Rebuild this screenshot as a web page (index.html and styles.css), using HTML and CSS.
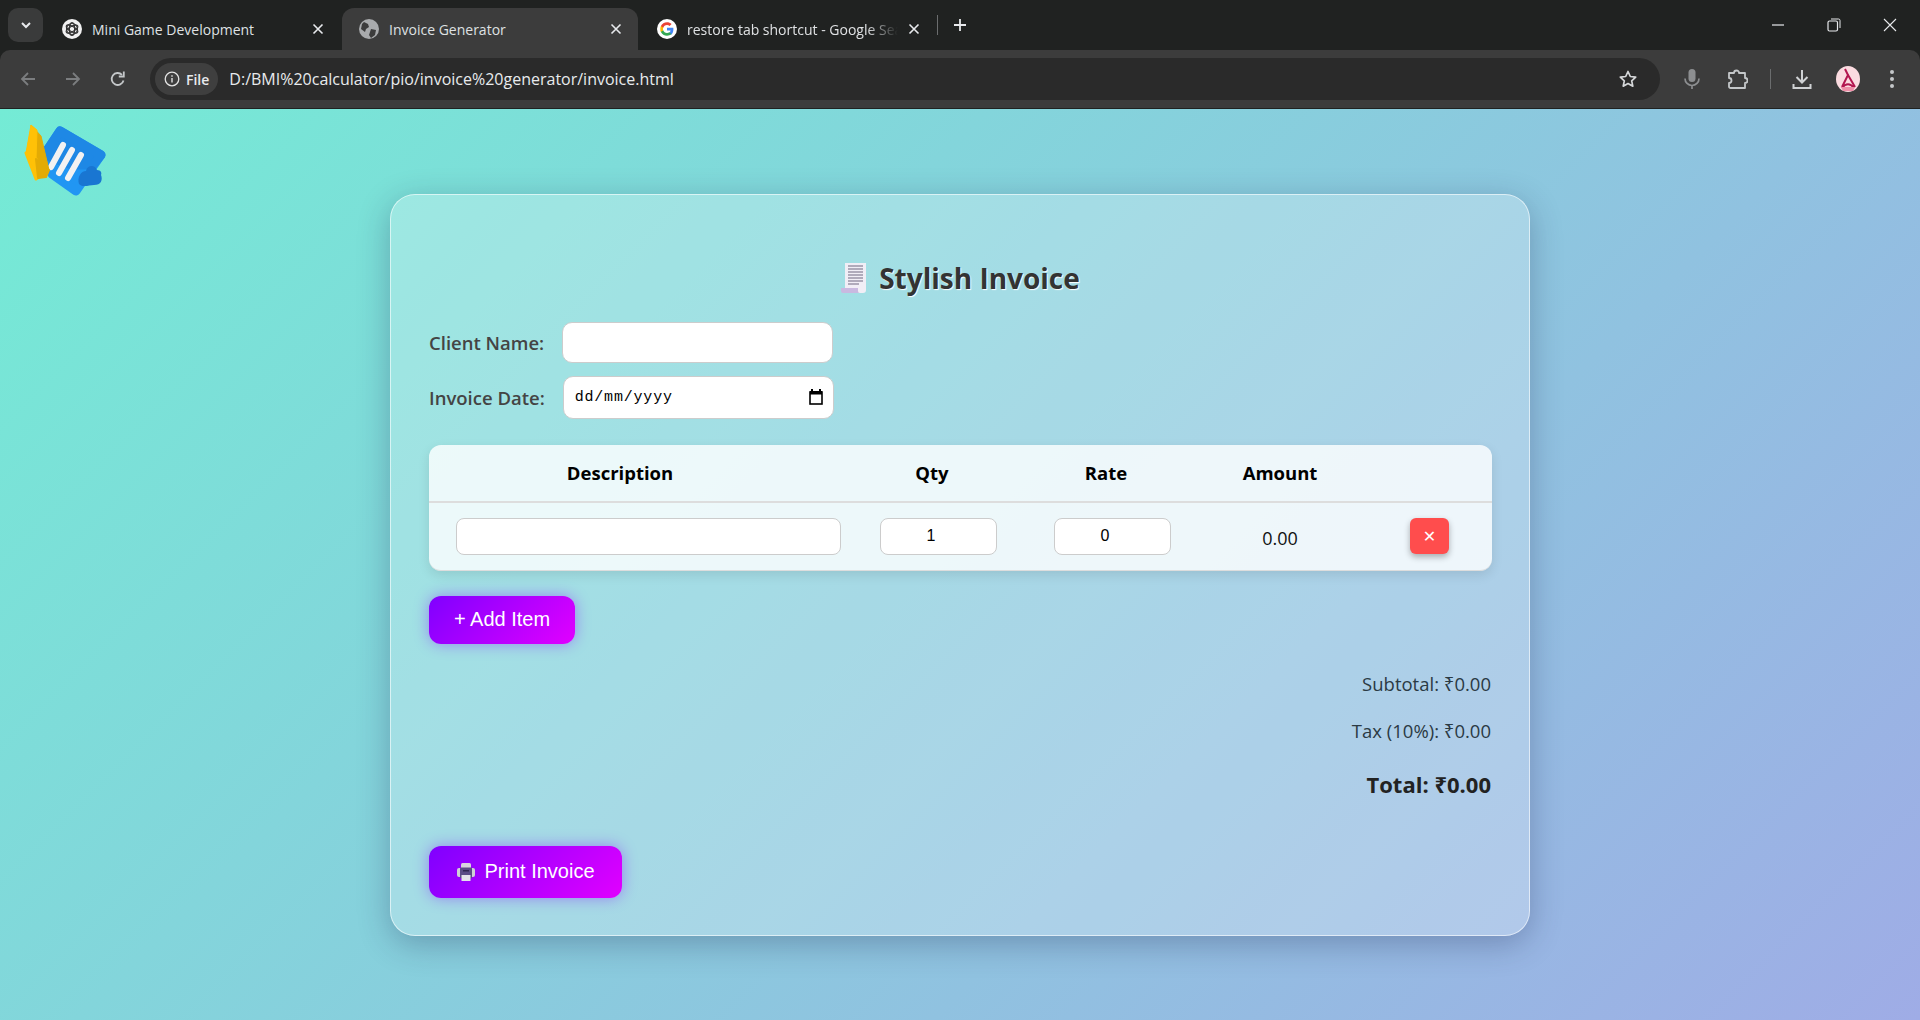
FILE: index.html
```html
<!DOCTYPE html>
<html>
<head>
  <meta charset="UTF-8">
  <title>Invoice Generator</title>
  <link rel="stylesheet" href="styles.css">
</head>
<body>
  <header class="browser">
    <div class="tabstrip">
      <button class="tab-search">
        <svg width="12" height="12" viewBox="0 0 12 12"><path d="M2 4l4 4 4-4" fill="none" stroke="#e8eaed" stroke-width="2"/></svg>
      </button>
      <div class="tab">
        <svg class="favicon" width="20" height="20" viewBox="0 0 20 20"><circle cx="10" cy="10" r="10" fill="#f1f1f1"/><g fill="none" stroke="#333" stroke-width="1.2"><circle cx="10" cy="10" r="5.5"/><ellipse cx="10" cy="10" rx="6.5" ry="2.6" transform="rotate(30 10 10)"/><ellipse cx="10" cy="10" rx="6.5" ry="2.6" transform="rotate(90 10 10)"/><ellipse cx="10" cy="10" rx="6.5" ry="2.6" transform="rotate(150 10 10)"/></g></svg>
        <span class="tab-title">Mini Game Development</span>
        <svg class="tab-close" width="12" height="12" viewBox="0 0 12 12"><path d="M1.5 1.5l9 9M10.5 1.5l-9 9" stroke="#e8eaed" stroke-width="1.6"/></svg>
      </div>
      <div class="tab tab-active">
        <svg class="favicon" width="20" height="20" viewBox="0 0 20 20"><circle cx="10" cy="10" r="10" fill="#a9abad"/><path d="M5 3l4 2 1 3-3 2-1 3-4-3 1-5zM12 10l5 1-1 5-4 3-2-3 1-3z" fill="#3c3c3c"/></svg>
        <span class="tab-title">Invoice Generator</span>
        <svg class="tab-close" width="12" height="12" viewBox="0 0 12 12"><path d="M1.5 1.5l9 9M10.5 1.5l-9 9" stroke="#e8eaed" stroke-width="1.6"/></svg>
      </div>
      <div class="tab">
        <svg class="favicon" width="20" height="20" viewBox="0 0 20 20"><circle cx="10" cy="10" r="10" fill="#fff"/><path d="M16.4 10.2c0-.5 0-1-.1-1.4H10v2.7h3.6c-.2.9-.6 1.6-1.3 2.1v1.8h2.2c1.2-1.2 1.9-3 1.9-5.2z" fill="#4285f4"/><path d="M10 16.7c1.8 0 3.300-.6 4.500-1.600l-2.200-1.800c-.6.4-1.400.7-2.300.7-1.800 0-3.300-1.200-3.800-2.800H3.900v1.800c1.100 2.200 3.400 3.700 6.100 3.700z" fill="#34a853"/><path d="M6.200 11.200c-.3-.8-.3-1.600 0-2.400V7H3.900c-.8 1.900-.8 4 0 6z" fill="#fbbc05"/><path d="M10 5.900c1 0 1.900.3 2.600 1l2-2C13.300 3.800 11.800 3.200 10 3.200 7.300 3.200 5 4.700 3.900 7l2.300 1.800C6.700 7.100 8.200 5.900 10 5.900z" fill="#ea4335"/></svg>
        <span class="tab-title tab-fade">restore tab shortcut - Google Search</span>
        <svg class="tab-close" width="12" height="12" viewBox="0 0 12 12"><path d="M1.500 1.500l9 9M10.500 1.500l-9 9" stroke="#e8eaed" stroke-width="1.600"/></svg>
      </div>
      <span class="tab-sep"></span>
      <svg class="new-tab" width="14" height="14" viewBox="0 0 14 14"><path d="M7 1v12M1 7h12" stroke="#e8eaed" stroke-width="1.800"/></svg>
      <div class="window-controls">
        <svg width="14" height="14" viewBox="0 0 14 14"><path d="M1 7h12" stroke="#e8eaed" stroke-width="1.200"/></svg>
        <svg width="14" height="14" viewBox="0 0 14 14"><rect x="1" y="3" width="9.500" height="10" rx="1.500" fill="none" stroke="#e8eaed" stroke-width="1.200"/><path d="M4 1h7.500a1.500 1.500 0 0 1 1.500 1.500V10" fill="none" stroke="#e8eaed" stroke-width="1"/></svg>
        <svg width="14" height="14" viewBox="0 0 14 14"><path d="M1 1l12 12M13 1L1 13" stroke="#e8eaed" stroke-width="1.100"/></svg>
      </div>
    </div>
    <div class="toolbar">
      <svg class="nav-icon" width="18" height="18" viewBox="0 0 18 18"><path d="M16 9H3M9 3L3 9l6 6" fill="none" stroke="#7b7d7f" stroke-width="1.800"/></svg>
      <svg class="nav-icon" width="18" height="18" viewBox="0 0 18 18"><path d="M2 9h13M9 3l6 6-6 6" fill="none" stroke="#7b7d7f" stroke-width="1.800"/></svg>
      <svg class="nav-icon" width="18" height="18" viewBox="0 0 18 18"><path d="M14.500 10.500A6 6 0 1 1 13 4.800" fill="none" stroke="#c4c7c9" stroke-width="1.800"/><path d="M14.800 1.500v5h-5" fill="none" stroke="#c4c7c9" stroke-width="1.800"/></svg>
      <div class="omnibox">
        <span class="file-chip">
          <svg width="16" height="16" viewBox="0 0 16 16"><circle cx="8" cy="8" r="6.800" fill="none" stroke="#e3e3e3" stroke-width="1.300"/><path d="M8 7v4.500M8 4.200v1.600" stroke="#e3e3e3" stroke-width="1.400"/></svg>
          File
        </span>
        <span class="url">D:/BMI%20calculator/pio/invoice%20generator/invoice.html</span>
        <svg class="star" width="20" height="20" viewBox="0 0 20 20"><path d="M10 2.500l2.300 5 5.400.6-4 3.700 1.100 5.400L10 14.500l-4.800 2.700 1.100-5.400-4-3.700 5.400-.6z" fill="none" stroke="#d5d7d9" stroke-width="1.700" stroke-linejoin="round"/></svg>
      </div>
      <div class="toolbar-actions">
        <svg class="act-mic" width="18" height="24" viewBox="0 0 18 24"><rect x="5.500" y="2" width="7" height="13" rx="3.500" fill="#8d8f91"/><path d="M2 11.500a7 7 0 0 0 14 0M9 18.500V22" fill="none" stroke="#8d8f91" stroke-width="1.700"/></svg>
        <svg class="act-ext" width="22" height="22" viewBox="0 0 22 22"><path d="M3 5h5a2.500 2.500 0 0 1 5 0h6v5a2.500 2.500 0 0 1 0 5v5H4.500A1.500 1.500 0 0 1 3 18.500V15a2.500 2.500 0 0 0 0-5z" fill="none" stroke="#c4c7c9" stroke-width="1.800" stroke-linejoin="round"/></svg>
        <span class="act-sep"></span>
        <svg class="act-dl" width="20" height="22" viewBox="0 0 20 22"><path d="M10 2v12M4.500 9l5.500 5.500L15.500 9M1.500 16v4h17v-4" fill="none" stroke="#d0d2d4" stroke-width="2"/></svg>
        <svg class="act-avatar" width="24" height="26" viewBox="0 0 24 26"><ellipse cx="12" cy="13" rx="12" ry="13" fill="#fbdbe0"/><path d="M9 3l3 6-6 12M12 9l7 12M6 22c4-5 8-5 12 0" fill="none" stroke="#b3164f" stroke-width="2"/><path d="M5 21h14l-2 4H7z" fill="#ee8fa8"/></svg>
        <svg class="act-dots" width="6" height="20" viewBox="0 0 6 20"><circle cx="3" cy="3" r="2" fill="#c4c7c9"/><circle cx="3" cy="10" r="2" fill="#c4c7c9"/><circle cx="3" cy="17" r="2" fill="#c4c7c9"/></svg>
      </div>
    </div>
  </header>

  <main class="page">
    <svg class="app-logo" width="140" height="110" viewBox="0 0 140 110">
      <path d="M60 21L101 45 76 81 52 64 44 45z" fill="#2196f3" stroke="#2196f3" stroke-width="9" stroke-linejoin="round"/>
      <path d="M60 21L101 45 93 55 72 55 44 45 z" fill="#1e88e5" stroke="#1e88e5" stroke-width="9" stroke-linejoin="round"/>
      <path d="M63 35L51 57M72 40L59 63M81 45L68 68" stroke="#f2f2f2" stroke-width="6" stroke-linecap="round"/>
      <path d="M79 74c-2-7 2-13 7-13 1-6 9-7 11-1 4 0 5 3 4 5 2 5 0 10-7 10-5 0-11 3-15-1z" fill="#1976d2"/>
      <path d="M31 15L26 43 37 52 36 47z" fill="#ffc107"/>
      <path d="M31 15L41 26 49 60 36 50z" fill="#e3ab05" stroke="#e3ab05"/>
      <path d="M31 15L26 43 36 49 37 20z" fill="#ffc107" stroke="#ffc107" stroke-width="1" transform="translate(0 0)"/>
      <path d="M26 43L36 49 44 63 36 69z" fill="#ffc107" stroke="#ffc107" stroke-width="3" stroke-linejoin="round"/>
      <path d="M36 49L49 60 46 67 38 68z" fill="#e3ab05" stroke="#e3ab05" stroke-width="2" stroke-linejoin="round"/>
    </svg>

    <section class="card">
      <h2 class="title">
        <svg class="title-icon" width="28" height="32" viewBox="0 0 28 32"><path d="M5 1h21v27a3 3 0 0 1-3 3H3l2-3z" fill="#f1eef6"/><path d="M1 26h17v3a2 2 0 0 0 2 2H3a2 2 0 0 1-2-2z" fill="#c9b9e0"/><path d="M8 4h15M8 7h15M8 10h15M8 13h15M8 16h15M8 19h15M8 22h11" stroke="#9b95a8" stroke-width="1.500"/></svg>
        <span>Stylish Invoice</span>
      </h2>

      <div class="field">
        <label>Client Name:</label>
        <input class="client-input" type="text">
      </div>
      <div class="field field-date">
        <label>Invoice Date:</label>
        <div class="date-input">
          <span>dd/mm/yyyy</span>
          <svg width="14" height="16" viewBox="0 0 14 16"><path d="M3 0v3M11 0v3" stroke="#000" stroke-width="2"/><rect x="1" y="3" width="12" height="12" fill="none" stroke="#000" stroke-width="1.600"/><rect x="1" y="2" width="12" height="3.500" fill="#000"/></svg>
        </div>
      </div>

      <table class="items">
        <thead>
          <tr>
            <th class="col-desc">Description</th>
            <th class="col-num">Qty</th>
            <th class="col-num">Rate</th>
            <th class="col-amount">Amount</th>
            <th class="col-del"></th>
          </tr>
        </thead>
        <tbody>
          <tr>
            <td class="cell-desc"><input type="text"></td>
            <td class="cell-num"><input type="number" value="1"></td>
            <td class="cell-num"><input type="number" value="0"></td>
            <td class="cell-amount">0.00</td>
            <td class="cell-del"><button class="btn-del">✕</button></td>
          </tr>
        </tbody>
      </table>

      <button class="btn btn-add">+ Add Item</button>

      <div class="totals">
        <p class="sub">Subtotal: ₹0.00</p>
        <p class="tax">Tax (10%): ₹0.00</p>
        <p class="total">Total: ₹0.00</p>
      </div>

      <button class="btn btn-print">
        <svg width="20" height="20" viewBox="0 0 20 20"><rect x="5" y="1" width="10" height="7" rx="1.500" fill="#d8d4de"/><rect x="1" y="6" width="18" height="9" rx="2" fill="#cfd0d6"/><rect x="4" y="5.500" width="12" height="11" rx="1" fill="#5b4c86"/><rect x="7" y="8" width="6" height="1.500" fill="#2e2650"/><rect x="5.500" y="13" width="9" height="6" fill="#e4e2ea"/></svg>
        Print Invoice
      </button>
    </section>
  </main>
</body>
</html>
```

FILE: styles.css
```css
* {
  box-sizing: border-box;
}
html, body {
  height: 100%;
}
body {
  margin: 0;
  display: flex;
  flex-direction: column;
  font-family: "Open Sans", "Noto Sans", sans-serif;
  overflow: hidden;
}

/* browser frame */
.browser {
  background: #202221;
  color: #e8eaed;
  flex: none;
}
.tabstrip {
  height: 50px;
  display: flex;
  align-items: flex-end;
  position: relative;
  padding-left: 8px;
}
.tab-search {
  width: 35px;
  height: 34px;
  margin-bottom: 8px;
  background: #3a3b3b;
  border: none;
  border-radius: 10px;
  padding: 0;
  display: flex;
  align-items: center;
  justify-content: center;
}
.tab {
  width: 296px;
  height: 42px;
  display: flex;
  align-items: center;
  padding: 0 16px 0 17px;
  font-family: "Open Sans", sans-serif;
  font-size: 14px;
  border-radius: 12px 12px 0 0;
  margin-right: 2px;
}
.tab:first-of-type {
  width: 295px;
  margin-left: 2px;
}
.tab-active {
  background: #3c3c3c;
}
.favicon {
  flex: none;
  margin-right: 10px;
}
.tab-title {
  flex: 1;
  white-space: nowrap;
  overflow: hidden;
  color: #dfe1e3;
}
.tab-fade {
  -webkit-mask-image: linear-gradient(90deg, #000 85%, transparent);
  mask-image: linear-gradient(90deg, #000 85%, transparent);
}
.tab-close {
  flex: none;
  margin-left: 10px;
}
.tab-sep {
  width: 1px;
  height: 20px;
  background: #6b6d6e;
  margin: 0 0 15px -1px;
}
.new-tab {
  margin: 0 0 18px 15px;
}
.window-controls {
  display: flex;
  gap: 42px;
  margin: 0 23px 18px auto;
}
.toolbar {
  height: 58px;
  background: #3c3c3c;
  border-radius: 10px 10px 0 0;
  display: flex;
  align-items: center;
  padding: 0 19px 0 19px;
  margin-bottom: 1px;
}
.nav-icon {
  margin-right: 27px;
}
.nav-icon:nth-child(3) {
  margin-right: 23px;
}
.omnibox {
  width: 1510px;
  height: 42px;
  margin-top: 0;
  background: #2a2a2a;
  border-radius: 21px;
  display: flex;
  align-items: center;
  padding: 0 22px 0 5px;
}
.file-chip {
  display: flex;
  align-items: center;
  gap: 6px;
  height: 32px;
  padding: 0 9px;
  background: #3f3f3f;
  border-radius: 16px;
  font-size: 14px;
  font-weight: 600;
}
.url {
  margin-left: 11px;
  font-size: 16px;
  flex: 1;
  color: #e8eaed;
}
.toolbar-actions {
  display: flex;
  align-items: center;
  margin-left: 23px;
}
.act-ext {
  margin-left: 25px;
}
.act-sep {
  width: 1px;
  height: 20px;
  background: #6b6d6e;
  margin-left: 22px;
}
.act-dl {
  margin-left: 21px;
}
.act-avatar {
  margin-left: 24px;
}
.act-dots {
  margin-left: 29px;
}

/* page */
.page {
  flex: 1;
  position: relative;
  display: flex;
  align-items: center;
  justify-content: center;
  background: linear-gradient(135deg, #74ebd5, #9face6);
}
.app-logo {
  position: absolute;
  left: 0;
  top: 1px;
}
.card {
  width: 1140px;
  height: 742px;
  padding: 38px;
  background: rgba(255, 255, 255, 0.25);
  border: 1px solid rgba(255, 255, 255, 0.6);
  border-radius: 25px;
  box-shadow: 0 8px 32px rgba(31, 38, 80, 0.3);
}
.title {
  margin: 24px 0 23px;
  height: 42px;
  display: flex;
  align-items: center;
  justify-content: center;
  gap: 11px;
  font-size: 28px;
  font-weight: 700;
  color: #333;
  text-shadow: 1px 1px 1px #fff;
}
.field {
  display: flex;
  align-items: center;
  gap: 18px;
  height: 41px;
}
.field-date {
  height: 43px;
  margin-top: 13px;
}
.field label {
  font-size: 18.500px;
  font-weight: 600;
  color: #444;
}
.field input,
.date-input {
  width: 271px;
  height: 100%;
  background: #fff;
  border: 1px solid #ccc;
  border-radius: 10px;
}
.date-input {
  display: flex;
  align-items: center;
  justify-content: space-between;
  padding: 0 10px 0 11px;
  font-family: "Liberation Mono", monospace;
  font-size: 15px;
  letter-spacing: 0.800px;
  color: #000;
}
.items {
  width: 100%;
  margin-top: 26px;
  height: 126px;
  border-collapse: separate;
  border-spacing: 0;
  table-layout: fixed;
  background: rgba(255, 255, 255, 0.8);
  border-radius: 12px;
  box-shadow: 0 4px 12px rgba(0, 0, 0, 0.1);
  border-bottom: 1px solid #ddd;
}
.items th {
  height: 58px;
  font-size: 18.500px;
  font-weight: 700;
  color: #000;
  border-bottom: 2px solid #ddd;
  padding: 0;
}
.col-desc {
  width: 416px;
  padding-right: 34px !important;
}
.col-num,
.col-amount {
  width: 174px;
}
.col-del {
  width: 125px;
}
.items td {
  padding: 0;
}
.items input {
  height: 37px;
  background: #fff;
  border: 1px solid #ccc;
  border-radius: 8px;
  font-family: "Liberation Sans", sans-serif;
  font-size: 16px;
  display: block;
}
.cell-desc input {
  width: 385px;
  margin-left: 27px;
}
.cell-num input {
  width: 117px;
  margin-left: 35px;
  text-align: center;
}
.cell-amount {
  text-align: center;
  font-size: 18px;
  color: #111;
  padding-top: 3px !important;
}
.cell-del {
  text-align: center;
}
.btn-del {
  width: 39px;
  height: 36px;
  border: none;
  border-radius: 6px;
  background: #ff4d4d;
  color: #fff;
  font-family: "DejaVu Sans", sans-serif;
  font-size: 16px;
  font-weight: 700;
  padding: 0;
  box-shadow: 0 3px 6px rgba(0, 0, 0, 0.3);
}
.btn {
  display: flex;
  align-items: center;
  border: none;
  border-radius: 12px;
  background: linear-gradient(135deg, #7f00ff, #e100ff);
  color: #fff;
  font-family: "Liberation Sans", sans-serif;
  font-size: 20px;
  box-shadow: 0 0 15px rgba(127, 0, 255, 0.4);
}
.btn-add {
  width: 146px;
  height: 48px;
  margin-top: 25px;
  justify-content: center;
  padding: 0;
}
.totals {
  margin-top: 25px;
  text-align: right;
  color: #2b3a44;
}
.totals p {
  margin: 0;
}
.sub,
.tax {
  font-size: 18.500px;
  line-height: 30px;
}
.tax {
  margin-top: 17px !important;
}
.total {
  margin-top: 20px !important;
  font-size: 22px;
  line-height: 36px;
  font-weight: 700;
  color: #222;
}
.btn-print {
  width: 193px;
  height: 52px;
  margin-top: 44px;
  gap: 8px;
  justify-content: center;
  padding: 0;
}
```
